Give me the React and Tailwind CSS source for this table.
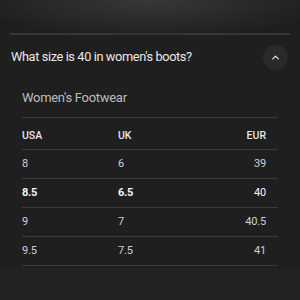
import React from "react";

const ROWS = [
  { usa: "8", uk: "6", eur: "39" },
  { usa: "8.5", uk: "6.5", eur: "40", bold: true },
  { usa: "9", uk: "7", eur: "40.5" },
  { usa: "9.5", uk: "7.5", eur: "41" },
];

function ChevronUp() {
  return (
    <svg width="11" height="11" viewBox="0 0 24 24" fill="none" stroke="#e6e6e6" strokeWidth="2.8" strokeLinecap="round" strokeLinejoin="round">
      <path d="M6 15l6-6 6 6" />
    </svg>
  );
}

export default function App() {
  return (
    <div className="w-[300px] h-[300px] overflow-hidden bg-[#1f1f1f] flex flex-col" style={{ fontFamily: "Roboto, 'Liberation Sans', sans-serif" }}>
      {/* top fade */}
      <div className="h-[33px] shrink-0 bg-[radial-gradient(ellipse_60%_120%_at_50%_0%,#383838,#1e1e1e)]" />
      <div className="mx-[10px] h-[2px] bg-[#363636]" />

      {/* question */}
      <div className="flex items-center justify-between pl-[11px] pr-[12px] h-[44px]">
        <span className="text-[12.8px] tracking-[-0.4px] text-[#e8e8e8]">What size is 40 in women's boots?</span>
        <div className="w-[25px] h-[25px] rounded-full bg-[#2a2a2a] flex items-center justify-center">
          <ChevronUp />
        </div>
      </div>

      {/* table */}
      <div className="px-[22px]">
        <div className="h-[38px] flex items-center text-[13px] tracking-[-0.3px] text-[#bdbdbd]">Women's Footwear</div>
        <div className="h-px bg-[#3a3a3a]" />
        <div className="h-[31px] flex items-center pt-[5px] text-[10.5px] font-medium text-[#e6e6e6] pr-[12px]">
          <span className="w-[96px]">USA</span>
          <span className="flex-1">UK</span>
          <span>EUR</span>
        </div>
        <div className="h-px bg-[#3a3a3a]" />
        {ROWS.map((r) => (
          <div key={r.usa}>
            <div className={`h-[28px] flex items-center text-[11px] tracking-[-0.2px] pr-[12px] ${r.bold ? "text-[#f4f4f4]" : "text-[#cfcfcf]"}`}>
              <span className={`w-[96px] ${r.bold ? "font-bold" : ""}`}>{r.usa}</span>
              <span className={`flex-1 ${r.bold ? "font-bold" : ""}`}>{r.uk}</span>
              <span>{r.eur}</span>
            </div>
            <div className="h-px bg-[#3a3a3a]" />
          </div>
        ))}
      </div>
      <div className="flex-1 mt-[2px] bg-[#222222]" />
    </div>
  );
}
